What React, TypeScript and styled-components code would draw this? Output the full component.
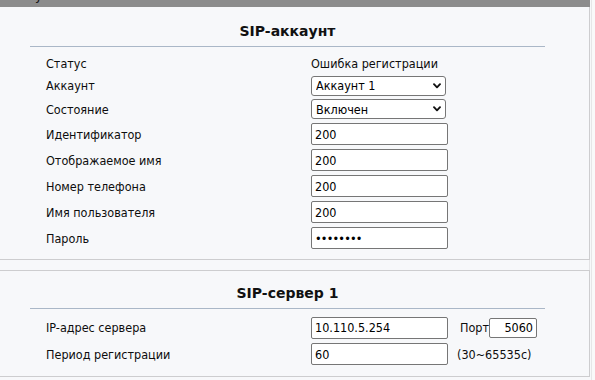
import React from "react";
import styled, { createGlobalStyle } from "styled-components";

const GlobalStyle = createGlobalStyle`
  html, body { margin: 0; padding: 0; background: #f7f8fa; }
  body {
    font-family: "DejaVu Sans Condensed", "DejaVu Sans", sans-serif;
    font-size: 12.5px;
    color: #0d0d0d;
  }
  * { box-sizing: border-box; }
`;

const Page = styled.div`
  display: flex;
  width: 595px;
  height: 380px;
  overflow: hidden;
`;

const Main = styled.div`
  width: 590px;
  display: flex;
  flex-direction: column;
`;

const SideStrip = styled.div`
  flex: 1;
  background: #f9f9fa;
  border-left: 1px solid #e6e6e8;
  margin-left: 1px;
`;

const Header = styled.div`
  height: 7px;
  background: #8c8c8c;
  overflow: hidden;
  padding-left: 35px;
`;

const HeaderTitle = styled.span`
  display: block;
  margin-top: -12px;
  font-size: 14px;
  line-height: 14px;
  color: #111;
`;

const Panel = styled.section<{ $top?: boolean }>`
  background: #f7f8fa;
  border-right: 1px solid #cdcdcf;
  border-bottom: 1px solid #cdcdcf;
  border-top: ${(p) => (p.$top ? "1px solid #cdcdcf" : "none")};
  padding: ${(p) => (p.$top ? "12px 0 9px" : "14px 0 8px")};
`;

const Gap = styled.div`
  height: 10px;
  border-right: 1px solid #e3e3e5;
`;

const Inner = styled.div`
  margin-left: 30px;
  width: 515px;
`;

const Title = styled.h2`
  margin: 0 0 5px;
  height: 20px;
  line-height: 20px;
  text-align: center;
  font-family: "DejaVu Sans", sans-serif;
  font-size: 14px;
  font-weight: bold;
  color: #111;
`;

const Rule = styled.div`
  height: 1px;
  background: #aab7c7;
  margin-bottom: 5px;
`;

const Row = styled.div<{ $h: number }>`
  display: grid;
  grid-template-columns: 265px auto;
  align-items: center;
  height: ${(p) => p.$h}px;
  padding-left: 16px;
`;

const Label = styled.span`
  white-space: nowrap;
`;

const Value = styled.div`
  display: flex;
  align-items: center;
`;

const TextInput = styled.input<{ $w?: number; $h?: number; $right?: boolean }>`
  width: ${(p) => p.$w ?? 137}px;
  height: ${(p) => p.$h ?? 22}px;
  border: 1px solid #767676;
  border-radius: 2px;
  background: #fff;
  padding: 0 3px;
  font-family: "DejaVu Sans Condensed", "DejaVu Sans", sans-serif;
  font-size: 12.5px;
  color: #000;
  text-align: ${(p) => (p.$right ? "right" : "left")};
  outline: none;
  &[type="password"] {
    letter-spacing: -0.8px;
  }
`;

const SelectWrap = styled.div`
  position: relative;
  width: 135px;
  height: 20px;
`;

const Select = styled.select`
  appearance: none;
  -webkit-appearance: none;
  width: 100%;
  height: 100%;
  border: 1px solid #767676;
  border-radius: 3px;
  background: #fff;
  padding: 0 18px 0 4px;
  font-family: "DejaVu Sans Condensed", "DejaVu Sans", sans-serif;
  font-size: 12.5px;
  color: #000;
  outline: none;
`;

const Chevron = styled.svg`
  position: absolute;
  right: 5px;
  top: 7px;
  pointer-events: none;
`;

const Inline = styled.span<{ $ml: number }>`
  margin-left: ${(p) => p.$ml}px;
  white-space: nowrap;
`;

const ChevronIcon = () => (
  <Chevron width="8" height="6" viewBox="0 0 8 6">
    <path d="M1 1.2 L4 4.3 L7 1.2" fill="none" stroke="#111" strokeWidth="1.9" strokeLinecap="round" strokeLinejoin="round" />
  </Chevron>
);

const Dropdown = ({ value, options }: { value: string; options: string[] }) => (
  <SelectWrap>
    <Select defaultValue={value}>
      {options.map((o) => (
        <option key={o}>{o}</option>
      ))}
    </Select>
    <ChevronIcon />
  </SelectWrap>
);

const App: React.FC = () => (
  <>
    <GlobalStyle />
    <Page>
      <Main>
        <Header>
          <HeaderTitle>у</HeaderTitle>
        </Header>
        <Panel>
          <Inner>
            <Title>SIP-аккаунт</Title>
            <Rule />
            <Row $h={22}>
              <Label>Статус</Label>
              <Value>Ошибка регистрации</Value>
            </Row>
            <Row $h={23}>
              <Label>Аккаунт</Label>
              <Value>
                <Dropdown value="Аккаунт 1" options={["Аккаунт 1", "Аккаунт 2"]} />
              </Value>
            </Row>
            <Row $h={24}>
              <Label>Состояние</Label>
              <Value>
                <Dropdown value="Включен" options={["Включен", "Выключен"]} />
              </Value>
            </Row>
            <Row $h={26}>
              <Label>Идентификатор</Label>
              <Value>
                <TextInput defaultValue="200" />
              </Value>
            </Row>
            <Row $h={26}>
              <Label>Отображаемое имя</Label>
              <Value>
                <TextInput defaultValue="200" />
              </Value>
            </Row>
            <Row $h={26}>
              <Label>Номер телефона</Label>
              <Value>
                <TextInput defaultValue="200" />
              </Value>
            </Row>
            <Row $h={26}>
              <Label>Имя пользователя</Label>
              <Value>
                <TextInput defaultValue="200" />
              </Value>
            </Row>
            <Row $h={26}>
              <Label>Пароль</Label>
              <Value>
                <TextInput type="password" defaultValue="12345678" />
              </Value>
            </Row>
          </Inner>
        </Panel>
        <Gap />
        <Panel $top>
          <Inner>
            <Title>SIP-сервер 1</Title>
            <Rule />
            <Row $h={27}>
              <Label>IP-адрес сервера</Label>
              <Value>
                <TextInput defaultValue="10.110.5.254" />
                <Inline $ml={12}>Порт</Inline>
                <TextInput $w={48} $h={20} $right defaultValue="5060" />
              </Value>
            </Row>
            <Row $h={26}>
              <Label>Период регистрации</Label>
              <Value>
                <TextInput defaultValue="60" />
                <Inline $ml={9}>(30~65535с)</Inline>
              </Value>
            </Row>
          </Inner>
        </Panel>
      </Main>
      <SideStrip />
    </Page>
  </>
);

export default App;
